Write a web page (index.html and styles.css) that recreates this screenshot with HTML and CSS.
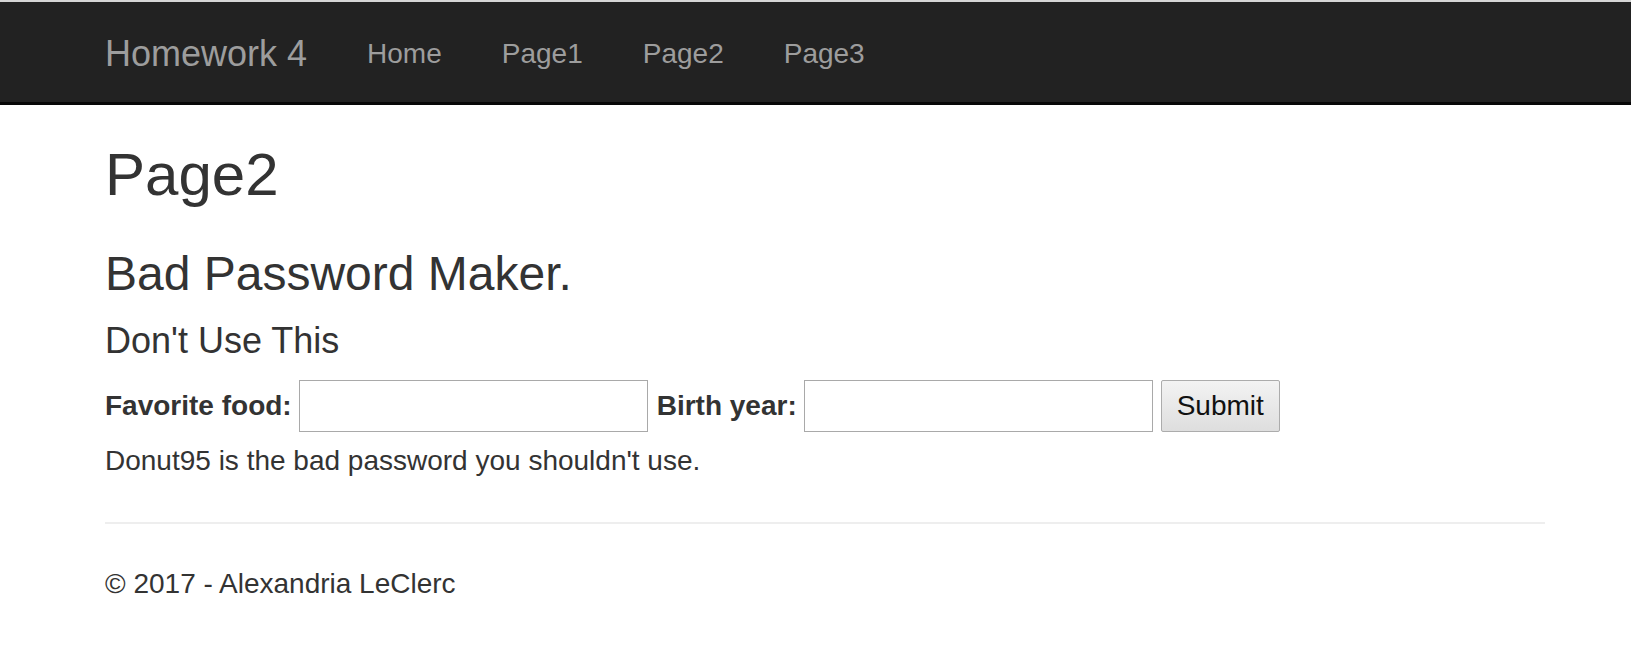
FILE: index.html
```html
<!DOCTYPE html>
<html lang="en">
<head>
<meta charset="utf-8">
<title>Page2 - Homework 4</title>
<link rel="stylesheet" href="styles.css">
</head>
<body>
<div class="topline"></div>
<header class="navbar">
  <div class="nav-inner">
    <a class="brand" href="#">Homework 4</a>
    <nav class="nav-links">
      <a href="#">Home</a>
      <a href="#">Page1</a>
      <a href="#">Page2</a>
      <a href="#">Page3</a>
    </nav>
  </div>
</header>
<main class="container">
  <h2 class="title">Page2</h2>
  <h3 class="subtitle">Bad Password Maker.</h3>
  <h4 class="warning">Don't Use This</h4>
  <form class="pw-form">
    <label class="field-label" for="food">Favorite food:</label>
    <input class="field-input" id="food" type="text">
    <label class="field-label" for="year">Birth year:</label>
    <input class="field-input" id="year" type="text">
    <button class="submit-btn" type="button">Submit</button>
  </form>
  <p class="result">Donut95 is the bad password you shouldn't use.</p>
  <hr class="divider">
  <footer class="footer">
    <p>&copy; 2017 - Alexandria LeClerc</p>
  </footer>
</main>
</body>
</html>
```
FILE: styles.css
```css
* {
  box-sizing: border-box;
}

html, body {
  margin: 0;
  padding: 0;
  background: #fff;
}

body {
  font-family: "Liberation Sans", Arial, Helvetica, sans-serif;
  font-size: 28px;
  line-height: 40px;
  color: #333;
}

.topline {
  height: 2px;
  background: #d6d6d6;
}

.navbar {
  height: 103px;
  background: #222;
  border-bottom: 3px solid #080808;
}

.nav-inner {
  width: 1440px;
  margin-left: 105px;
  height: 100px;
  padding-top: 4px;
  display: flex;
  align-items: center;
}

.brand {
  margin-left: -30px;
  padding: 0 30px;
  font-size: 36px;
  line-height: 96px;
  color: #9d9d9d;
  text-decoration: none;
}

.nav-links {
  display: flex;
}

.nav-links a {
  padding: 0 30px;
  font-size: 28px;
  line-height: 96px;
  color: #9d9d9d;
  text-decoration: none;
}

.container {
  width: 1440px;
  margin-left: 105px;
}

.title {
  margin: 37px 0 20px;
  font-size: 60px;
  line-height: 66px;
  font-weight: 400;
}

.subtitle {
  margin: 40px 0 20px;
  font-size: 48px;
  line-height: 52.8px;
  font-weight: 400;
}

.warning {
  margin: 20px 0 20px;
  font-size: 36px;
  line-height: 39.6px;
  font-weight: 400;
}

.pw-form {
  display: flex;
  align-items: center;
  height: 52px;
}

.field-label {
  font-weight: 700;
  font-size: 28px;
  line-height: 40px;
  margin-right: 7px;
}

.field-input {
  width: 349px;
  height: 52px;
  border: 1px solid #a9a9a9;
  background: #fff;
  margin-right: 9px;
  font-family: inherit;
  font-size: 28px;
  padding: 2px 4px;
}

.submit-btn {
  width: 119px;
  height: 52px;
  padding: 0;
  border: 1px solid #acacac;
  border-radius: 2px;
  background: linear-gradient(#f3f3f3, #dedede);
  font-family: inherit;
  font-size: 28px;
  color: #111;
  margin-left: -1px;
}

.result {
  margin: 9px 0 0;
}

.divider {
  margin: 41px 0 40px;
  border: 0;
  border-top: 2px solid #eee;
  height: 0;
}

.footer p {
  margin: 0 0 20px;
}
```
